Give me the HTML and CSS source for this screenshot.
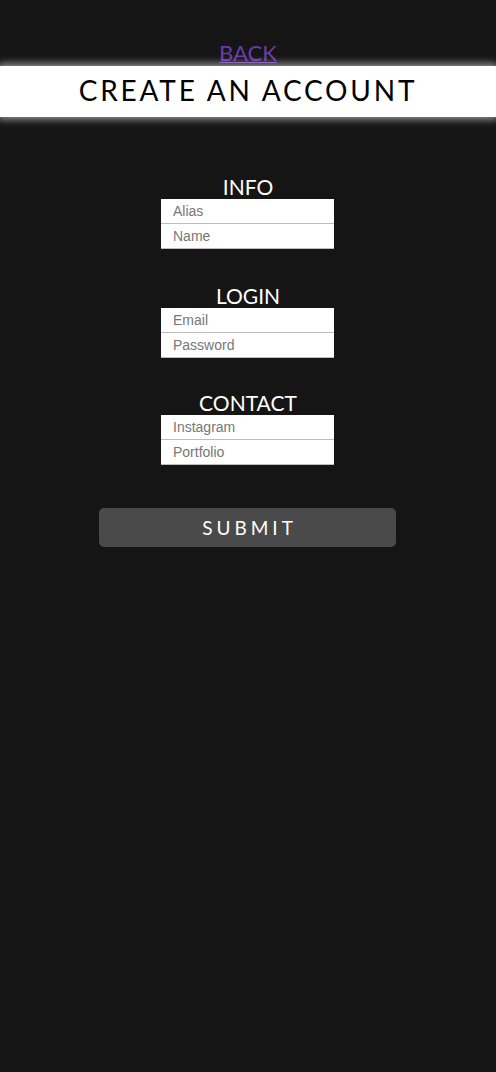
FILE: index.html
```html
<!DOCTYPE html>
<html>
<head>
<meta charset="utf-8">
<link rel="stylesheet" href="styles.css">
</head>
<body>
<div class="page">
  <a class="back" href="#">BACK</a>
  <header class="banner"><h1>CREATE AN ACCOUNT</h1></header>
  <form class="form">
    <section class="group">
      <h2>INFO</h2>
      <input class="field" placeholder="Alias">
      <input class="field" placeholder="Name">
    </section>
    <section class="group">
      <h2>LOGIN</h2>
      <input class="field" placeholder="Email">
      <input class="field" placeholder="Password" type="password">
    </section>
    <section class="group">
      <h2>CONTACT</h2>
      <input class="field" placeholder="Instagram">
      <input class="field" placeholder="Portfolio">
    </section>
    <button class="submit" type="button">SUBMIT</button>
  </form>
</div>
</body>
</html>
```
FILE: styles.css
```css
html, body {
  margin: 0;
  padding: 0;
  background: #151515;
  height: 100%;
}
.page {
  display: flex;
  flex-direction: column;
  align-items: center;
  padding-top: 40px;
  font-family: "Lato", "Open Sans", sans-serif;
}
.back {
  color: #6b3aa8;
  font-size: 22px;
  line-height: 26px;
  text-decoration: underline;
  text-decoration-thickness: 1px;
}
.banner {
  align-self: stretch;
  background: #fff;
  height: 51px;
  display: flex;
  align-items: center;
  justify-content: center;
  box-shadow: 0 0 8px 2px rgba(255,255,255,0.6);
}
.banner h1 {
  margin: 0 0 3px 0;
  font-weight: 400;
  font-size: 28px;
  letter-spacing: 2.8px;
  color: #000;
}
.form {
  display: flex;
  flex-direction: column;
  align-items: center;
  padding-top: 58px;
}
.group {
  display: flex;
  flex-direction: column;
  align-items: center;
  margin-bottom: 35px;
}
.group:nth-child(2) { margin-bottom: 33px; }
.group:nth-child(3) { margin-bottom: 43px; }
.group h2 {
  margin: 0;
  font-weight: 400;
  font-size: 21px;
  line-height: 24px;
  color: #fff;
}
.field {
  box-sizing: border-box;
  width: 173px;
  height: 25px;
  border: none;
  border-bottom: 1px solid #bdbdbd;
  background: #fff;
  padding: 0 12px;
  font-family: "Liberation Sans", Arial, sans-serif;
  font-size: 14px;
  color: #333;
  outline: none;
  margin: 0 1px 0 0;
}
.field::placeholder { color: #777; }
.submit {
  width: 297px;
  height: 39px;
  border: none;
  border-radius: 5px;
  background: #4a4a4a;
  color: #fff;
  font-family: "Lato", "Open Sans", sans-serif;
  font-size: 19px;
  letter-spacing: 4px;
  padding: 0 0 0 4px;
  margin-right: 1px;
}
```
